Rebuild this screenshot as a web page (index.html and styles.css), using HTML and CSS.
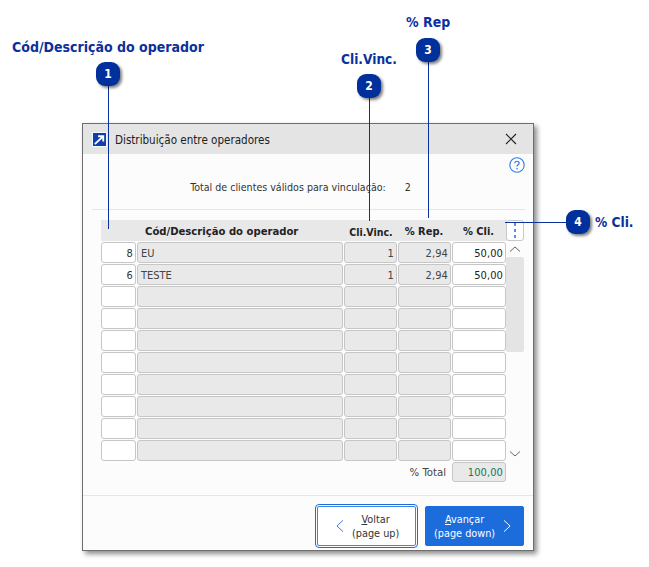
FILE: index.html
```html
<!DOCTYPE html>
<html lang="pt">
<head>
<meta charset="utf-8">
<title>Distribuição entre operadores</title>
<link rel="stylesheet" href="styles.css">
</head>
<body>
<div class="page">
  <section class="window">
    <header class="titlebar">
      <svg class="app-icon" width="15" height="15" viewBox="0 0 16 16"><rect x="0.5" y="0.5" width="15" height="15" fill="#0f3fa8" stroke="#fff"/><path d="M3 13 L11 5.5 M6.5 4.5 H12 V10" fill="none" stroke="#fff" stroke-width="2"/></svg>
      <span class="title">Distribuição entre operadores</span>
      <svg class="close" width="12" height="12" viewBox="0 0 12 12"><path d="M1 1 L11 11 M11 1 L1 11" stroke="#222" stroke-width="1.1" fill="none"/></svg>
    </header>
    <div class="help-row">
      <svg width="16" height="16" viewBox="0 0 16 16"><circle cx="8" cy="8" r="7.2" fill="none" stroke="#2f7de1" stroke-width="1.1"/><path d="M5.8 6.2 C5.8 3.6 10.2 3.6 10.2 6.1 C10.2 7.8 8 7.7 8 9.6" fill="none" stroke="#2f7de1" stroke-width="1.2"/><rect x="7.4" y="11" width="1.3" height="1.4" fill="#2f7de1"/></svg>
    </div>
    <div class="summary"><span>Total de clientes válidos para vinculação:</span><span class="summary-value">2</span></div>
    <div class="content">
      <div class="table-wrap">
        <div class="grid">
          <div class="hd"></div>
          <div class="hd hd-left">Cód/Descrição do operador</div>
          <div class="hd">Cli.Vinc.</div>
          <div class="hd hd-wide">% Rep.</div>
          <div class="hd hd-wide">% Cli.</div>

          <div class="cell white num">8</div><div class="cell gray txt">EU</div><div class="cell gray num">1</div><div class="cell gray num">2,94</div><div class="cell white num dark">50,00</div>
          <div class="cell white num">6</div><div class="cell gray txt">TESTE</div><div class="cell gray num">1</div><div class="cell gray num">2,94</div><div class="cell white num dark">50,00</div>
          <div class="cell white"></div><div class="cell gray"></div><div class="cell gray"></div><div class="cell gray"></div><div class="cell white"></div>
          <div class="cell white"></div><div class="cell gray"></div><div class="cell gray"></div><div class="cell gray"></div><div class="cell white"></div>
          <div class="cell white"></div><div class="cell gray"></div><div class="cell gray"></div><div class="cell gray"></div><div class="cell white"></div>
          <div class="cell white"></div><div class="cell gray"></div><div class="cell gray"></div><div class="cell gray"></div><div class="cell white"></div>
          <div class="cell white"></div><div class="cell gray"></div><div class="cell gray"></div><div class="cell gray"></div><div class="cell white"></div>
          <div class="cell white"></div><div class="cell gray"></div><div class="cell gray"></div><div class="cell gray"></div><div class="cell white"></div>
          <div class="cell white"></div><div class="cell gray"></div><div class="cell gray"></div><div class="cell gray"></div><div class="cell white"></div>
          <div class="cell white"></div><div class="cell gray"></div><div class="cell gray"></div><div class="cell gray"></div><div class="cell white"></div>
        </div>
        <div class="side">
          <div class="dots"><i></i><i></i><i></i></div>
          <div class="scroll">
            <svg width="14" height="8" viewBox="0 0 14 8"><path d="M2 6.5 L7 2 L12 6.5" fill="none" stroke="#666" stroke-width="1"/></svg>
            <div class="thumb"></div>
            <svg class="down" width="14" height="8" viewBox="0 0 14 8"><path d="M2 1.5 L7 6 L12 1.5" fill="none" stroke="#666" stroke-width="1"/></svg>
          </div>
        </div>
      </div>
      <div class="total-row"><span class="total-label">% Total</span><div class="total-value">100,00</div></div>
    </div>
    <footer class="footer">
      <button class="btn btn-back" type="button">
        <svg width="10" height="14" viewBox="0 0 10 16"><path d="M8.5 1.5 L1.5 8 L8.5 14.5" fill="none" stroke="#2f7de1" stroke-width="1.1"/></svg>
        <span class="btn-text"><span><u>V</u>oltar</span><span>(page up)</span></span>
      </button>
      <button class="btn btn-next" type="button">
        <span class="btn-text"><span><u>A</u>vançar</span><span>(page down)</span></span>
        <svg width="10" height="14" viewBox="0 0 10 16"><path d="M1.5 1.5 L8.5 8 L1.5 14.5" fill="none" stroke="#fff" stroke-width="1.1"/></svg>
      </button>
    </footer>
  </section>

  <h2 class="label label-1">Cód/Descrição do operador</h2>
  <h2 class="label label-2">Cli.Vinc.</h2>
  <h2 class="label label-3">% Rep</h2>
  <h2 class="label label-4">% Cli.</h2>
  <div class="line line-1"></div>
  <div class="line line-2"></div>
  <div class="line line-3"></div>
  <div class="line line-4"></div>
  <div class="badge badge-1">1</div>
  <div class="badge badge-2">2</div>
  <div class="badge badge-3">3</div>
  <div class="badge badge-4">4</div>
</div>
</body>
</html>
```
FILE: styles.css
```css
* { box-sizing: border-box; }
html, body { margin: 0; padding: 0; background: #fff; }
body { font-family: "DejaVu Sans", "Liberation Sans", sans-serif; font-stretch: condensed; font-size: 10.6px; color: #333; }
.page { position: relative; width: 649px; height: 567px; overflow: hidden; padding: 123px 0 0 82px; }

.window { width: 452px; height: 428px; background: #fcfcfc; border: 1px solid #6e6e6e; box-shadow: 3px 3px 5px rgba(0,0,0,.45); display: flex; flex-direction: column; }
.titlebar { height: 30px; background: #e4e4e4; display: flex; align-items: center; padding: 0 16px 0 9px; flex: none; }
.app-icon { flex: none; margin-top: 1px; }
.title { margin: 1px 0 0 8px; font-size: 11.55px; color: #222; flex: 1; }
.help-row { height: 19px; display: flex; justify-content: flex-end; align-items: flex-end; padding-right: 8px; flex: none; }
.summary { height: 28px; display: flex; justify-content: center; align-items: center; gap: 19px; padding-right: 15px; flex: none; }
.content { margin: 8px 8px 0 9px; border-top: 1px solid #e6e6e6; padding: 10px 0 0 9px; flex: none; height: 286px; position: relative; }

.table-wrap { display: flex; }
.grid { display: grid; grid-template-columns: 35px 206px 53px 53px 54px; grid-template-rows: 21px; grid-auto-rows: 20px; column-gap: 1px; row-gap: 2px; width: 405px; margin-bottom: -1px; }
.hd { background: #e8e8e8; font-weight: 700; font-size: 10.5px; color: #222; display: flex; align-items: center; justify-content: center; margin: 0 -1px 0 0; padding-top: 2px; }
.hd-left { justify-content: flex-start; padding-left: 8px; font-size: 11.2px; }
.hd-wide { font-size: 11px; padding-right: 2px; }
.cell { border: 1px solid #c6c6c6; border-radius: 3px; display: flex; align-items: center; font-size: 11px; padding-top: 1px; margin-top: -1px; }
.white { background: #fff; }
.gray { background: #e9e9e9; color: #444; }
.num { justify-content: flex-end; padding-right: 2px; letter-spacing: .1px; }
.txt { padding-left: 3px; }
.dark { color: #222; }

.side { width: 18px; display: flex; flex-direction: column; flex: none; }
.dots { height: 21px; border: 1px solid #c8c8c8; border-radius: 3px; background: #fff; display: flex; flex-direction: column; align-items: center; justify-content: center; gap: 3px; }
.dots i { width: 2px; height: 3px; background: #5a93e6; display: block; }
.scroll { flex: 1; display: flex; flex-direction: column; align-items: center; }
.scroll svg { margin-top: 4px; flex: none; }
.thumb { width: 18px; height: 95px; background: #e4e4e4; border-radius: 2px; margin-top: 4px; }
.scroll .down { margin-top: 98px; }

.total-row { display: flex; justify-content: flex-end; align-items: center; gap: 6px; padding-right: 18px; margin-top: 2px; width: 423px; height: 20px; }
.total-label { color: #444; font-size: 11.3px; }
.total-value { width: 54px; height: 20px; background: #e9e9e9; border: 1px solid #c6c6c6; border-radius: 3px; color: #127a5a; font-size: 11px; display: flex; align-items: center; justify-content: flex-end; padding: 1px 2px 0 0; letter-spacing: .1px; }

.footer { flex: 1; border-top: 1px solid #e6e6e6; display: flex; justify-content: flex-end; gap: 9px; padding: 10px 9px 0 0; }
.btn { width: 99px; height: 40px; border-radius: 2px; font: inherit; font-size: 10.8px; font-stretch: condensed; display: flex; align-items: center; justify-content: flex-start; padding: 0; cursor: default; }
.btn-text { display: flex; flex-direction: column; align-items: center; line-height: 14px; padding-top: 2px; }
.btn-back { background: #fff; color: #333; border: 1px solid #3f85e6; outline: 1px solid #1c6cdc; outline-offset: 1px; gap: 7px; padding-left: 17px; }
.btn-next { background: #1c6cdc; color: #fff; border: 1px solid #1c6cdc; gap: 7px; padding-left: 8px; }

.label { position: absolute; margin: 0; font-size: 14px; line-height: 18px; font-weight: 700; color: #0a319c; white-space: nowrap; }
.label-1 { left: 12px; top: 38px; }
.label-2 { left: 341px; top: 50px; font-size: 13.6px; }
.label-3 { left: 406px; top: 13px; }
.label-4 { left: 595px; top: 213px; font-size: 13.6px; }
.line { position: absolute; background: #0a319c; }
.line-1 { left: 108px; top: 85px; width: 1px; height: 144px; }
.line-2 { left: 369px; top: 97px; width: 1px; height: 124px; }
.line-3 { left: 428px; top: 61px; width: 1px; height: 157px; }
.line-4 { left: 505px; top: 222px; width: 62px; height: 1px; }
.badge { position: absolute; width: 24px; height: 24px; border-radius: 9px; background: #00309c; color: #fff; font-size: 12px; font-weight: 700; display: flex; align-items: center; justify-content: center; box-shadow: 2px 2px 3px rgba(0,0,0,.5); }
.badge-1 { left: 96px; top: 62px; }
.badge-2 { left: 357px; top: 74px; }
.badge-3 { left: 416px; top: 38px; }
.badge-4 { left: 566px; top: 210px; }
```
